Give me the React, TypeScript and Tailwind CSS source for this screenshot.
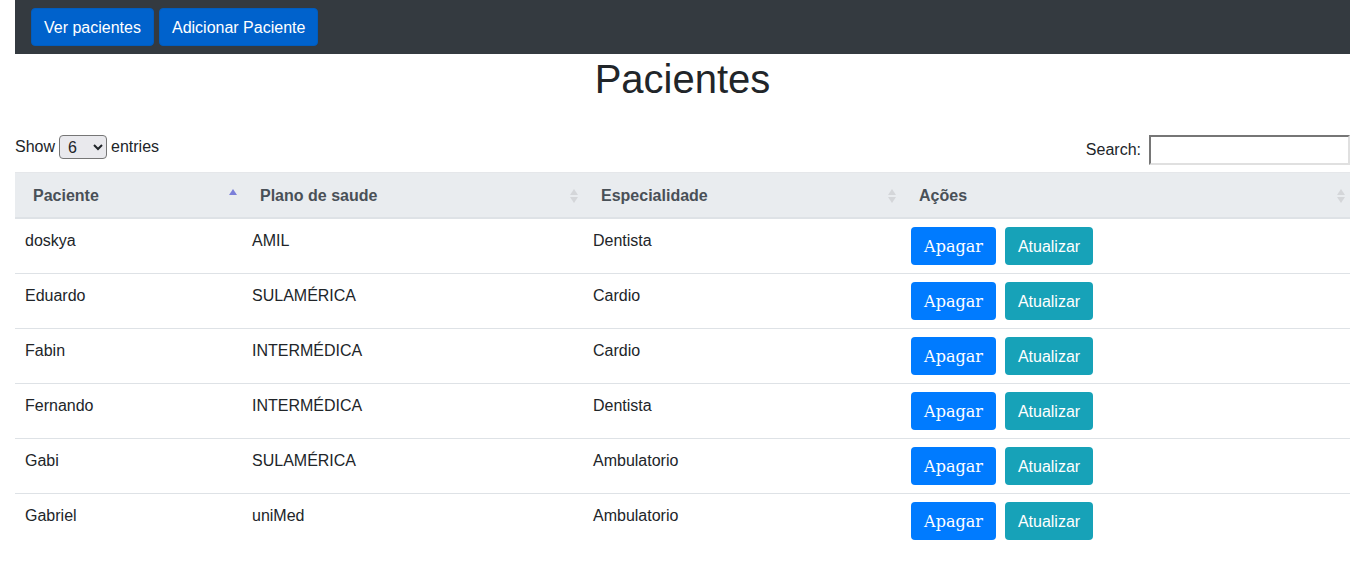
import React from 'react';

const rows = [
  { nome: 'doskya', plano: 'AMIL', esp: 'Dentista' },
  { nome: 'Eduardo', plano: 'SULAMÉRICA', esp: 'Cardio' },
  { nome: 'Fabin', plano: 'INTERMÉDICA', esp: 'Cardio' },
  { nome: 'Fernando', plano: 'INTERMÉDICA', esp: 'Dentista' },
  { nome: 'Gabi', plano: 'SULAMÉRICA', esp: 'Ambulatorio' },
  { nome: 'Gabriel', plano: 'uniMed', esp: 'Ambulatorio' },
];

const SortIcon = ({ active }: { active?: boolean }) => (
  <svg width="8" height="16" viewBox="0 0 8 16" className="absolute right-[5px] top-[15px]">
    <polygon points="4,1 8,7 0,7" fill={active ? '#7b7fd9' : '#d4d6d9'} />
    {!active && <polygon points="0,9 8,9 4,15" fill="#d4d6d9" />}
  </svg>
);

export default function App() {
  return (
    <div className="pl-[15px] bg-white min-h-[569px] text-[#212529]" style={{ fontFamily: '"Liberation Sans", Arial, sans-serif' }}>
      {/* navbar */}
      <nav className="h-[54px] bg-[#343a40] flex items-center gap-[5px] px-4">
        <button className="h-[38px] px-3 pt-[1px] rounded border border-[#005cbf] bg-[#0062cc] text-white text-base">Ver pacientes</button>
        <button className="h-[38px] px-3 pt-[1px] rounded border border-[#005cbf] bg-[#0062cc] text-white text-base">Adicionar Paciente</button>
      </nav>

      <h1 className="text-center text-[40px] leading-[48px] mt-[1px] font-normal">Pacientes</h1>

      {/* controls */}
      <div className="flex justify-between items-start mt-[32px] text-base">
        <div className="flex items-center h-[24px]">
          <span>Show</span>
          <select className="mx-[4px] h-[24px] w-[48px] px-[4px] rounded border border-[#767676] bg-[#e9e9ed] text-base">
            <option>6</option>
          </select>
          <span>entries</span>
        </div>
        <div className="flex items-center">
          <span className="mr-[8px]">Search:</span>
          <input className="w-[201px] h-[30px] border-2 border-t-[#767676] border-l-[#767676] border-r-[#e0e0e0] border-b-[#e0e0e0] bg-white" />
        </div>
      </div>

      {/* table */}
      <table className="w-full mt-[7px] border-collapse text-base">
        <thead>
          <tr className="bg-[#e9ecef] text-[#495057] border-t border-[#e5e7ea]">
            <th className="relative w-[227px] text-left font-bold pl-[18px] pt-[11px] pb-[9px] leading-[24px] border-b-2 border-[#dee2e6]">Paciente<SortIcon active /></th>
            <th className="relative w-[341px] text-left font-bold pl-[18px] pt-[11px] pb-[9px] leading-[24px] border-b-2 border-[#dee2e6]">Plano de saude<SortIcon /></th>
            <th className="relative w-[318px] text-left font-bold pl-[18px] pt-[11px] pb-[9px] leading-[24px] border-b-2 border-[#dee2e6]">Especialidade<SortIcon /></th>
            <th className="relative text-left font-bold pl-[18px] pt-[11px] pb-[9px] leading-[24px] border-b-2 border-[#dee2e6]">Ações<SortIcon /></th>
          </tr>
        </thead>
        <tbody>
          {rows.map((r, i) => (
            <tr key={i} className={i > 0 ? 'border-t border-[#dee2e6]' : ''}>
              <td className="align-top px-[10px] pt-[10px] pb-[8px] leading-[24px]">{r.nome}</td>
              <td className="align-top px-[10px] pt-[10px] pb-[8px] leading-[24px]">{r.plano}</td>
              <td className="align-top px-[10px] pt-[10px] pb-[8px] leading-[24px]">{r.esp}</td>
              <td className="align-top px-[10px] pt-[8px] pb-[8px]">
                <div className="flex">
                  <button
                    className="h-[38px] w-[85px] pt-[1px] rounded bg-[#007bff] text-white text-base"
                    style={{ fontFamily: '"DejaVu Serif", serif' }}
                  >
                    Apagar
                  </button>
                  <button className="ml-[9px] h-[38px] w-[88px] pt-[1px] rounded bg-[#17a2b8] text-white text-base">Atualizar</button>
                </div>
              </td>
            </tr>
          ))}
        </tbody>
      </table>
    </div>
  );
}
